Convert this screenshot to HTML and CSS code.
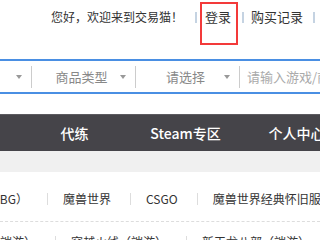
FILE: index.html
```html
<!DOCTYPE html>
<html lang="zh-CN">
<head>
  <meta charset="UTF-8">
  <title>交易猫</title>
  <link rel="stylesheet" href="styles.css">
</head>
<body>

<div class="topbar">
  <span class="greet">您好，欢迎来到交易猫！</span>
  <i class="sep"></i>
  <a class="login" href="#">登录</a>
  <i class="sep"></i>
  <a class="link" href="#">购买记录</a>
  <i class="sep"></i>
</div>

<div class="search">
  <div class="cell game-name">
    <span class="label">游戏名称</span>
    <i class="arrow"></i>
  </div>
  <div class="cell">
    <span class="label">商品类型</span>
    <i class="arrow"></i>
  </div>
  <div class="cell">
    <span class="label">请选择</span>
    <i class="arrow"></i>
  </div>
  <div class="keyword">请输入游戏/商品名称</div>
</div>

<div class="nav">
  <a href="#">首页</a>
  <a href="#">代练</a>
  <a href="#">Steam专区</a>
  <a href="#">个人中心</a>
</div>

<div class="games">
  <div class="row">
    <span class="game first"><span>绝地求生（PUBG）</span></span>
    <i class="bar"></i>
    <span class="game">魔兽世界</span>
    <i class="bar"></i>
    <span class="game">CSGO</span>
    <i class="bar"></i>
    <span class="game">魔兽世界经典怀旧服</span>
  </div>
  <div class="row">
    <span class="game first wide"><span>地下城与勇士（端游）</span></span>
    <i class="bar"></i>
    <span class="game">穿越火线（端游）</span>
    <i class="bar"></i>
    <span class="game">新天龙八部（端游）</span>
  </div>
</div>

</body>
</html>
```

FILE: styles.css
```css
* {
  box-sizing: border-box;
}

html, body {
  margin: 0;
  height: 100%;
  overflow: hidden;
  background: #fff;
  font-family: "Noto Sans CJK SC", "Microsoft YaHei", sans-serif;
  white-space: nowrap;
}

a {
  color: inherit;
  text-decoration: none;
}

/* top bar */
.topbar {
  display: flex;
  align-items: flex-start;
  height: 59px;
  padding: 7px 0 0 51px;
  color: #333;
  font-size: 13px;
  line-height: 20px;
}

.topbar > * {
  flex-shrink: 0;
}

.greet {
  font-size: 12px;
}

.sep {
  width: 2px;
  height: 11px;
  margin-top: 5px;
  background: #c5d3e2;
}

.topbar .sep:first-of-type {
  margin-left: 12px;
}

.login {
  margin: -5px 0 0 3px;
  padding: 3px 5px 16px 3px;
  border: 2px solid #f33a3a;
}

.login + .sep {
  margin-left: 4px;
}

.link {
  margin-left: 7px;
}

.link + .sep {
  margin-left: 10px;
}

/* search */
.search {
  display: flex;
  align-items: center;
  height: 35px;
  margin-left: -140px;
  border-top: 2px solid #4a8fe3;
  border-bottom: 2px solid #4a8fe3;
  font-size: 13px;
  color: #888;
}

.cell {
  display: flex;
  flex-shrink: 0;
  align-items: center;
  width: 104px;
  height: 22px;
  padding: 0 9px 0 11px;
  border-right: 1px solid #ccc;
}

.cell.game-name {
  width: 172px;
}

.label {
  flex: 1;
  text-align: center;
}

.arrow {
  width: 0;
  height: 0;
  border-left: 3.5px solid transparent;
  border-right: 3.5px solid transparent;
  border-top: 4px solid #999;
}

.keyword {
  flex-shrink: 0;
  padding-left: 7px;
  color: #aaa;
}

/* nav */
.nav {
  display: flex;
  align-items: center;
  height: 37px;
  margin: 20px 0 0 -92px;
  background: #454449;
  border-top: 1px solid #5c5b60;
  color: #fff;
  font-size: 14px;
  font-weight: 500;
}

.nav a {
  flex-shrink: 0;
  width: 111px;
  text-align: center;
}

/* games */
.games {
  padding-top: 7px;
  border-top: 21px solid #f0f0f0;
  font-size: 12px;
  color: #333;
}

.row {
  display: flex;
  align-items: center;
  padding: 10px 0 12px;
  line-height: 20px;
  border-bottom: 1px dashed #ddd;
}

.row > * {
  flex-shrink: 0;
}

.game {
  padding: 0 19px 0 15px;
}

.game.first {
  display: flex;
  justify-content: flex-end;
  width: 47px;
  padding-left: 0;
}

.game.first.wide {
  width: 55px;
}

.bar {
  width: 1px;
  height: 12px;
  background: #ddd;
}
```
